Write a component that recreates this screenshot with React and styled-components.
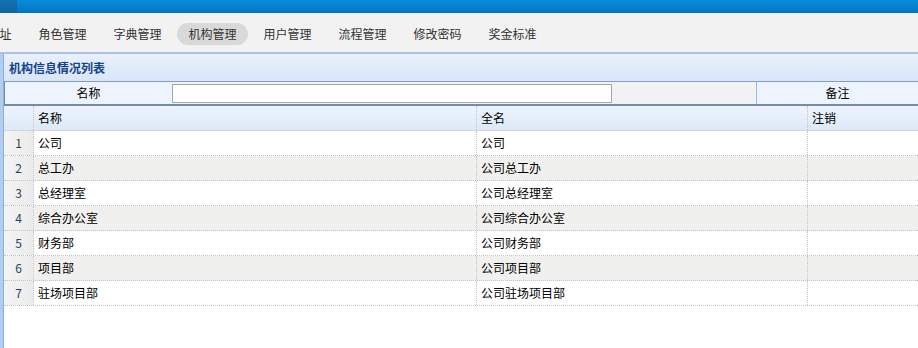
import React from "react";
import styled, { createGlobalStyle } from "styled-components";

const Global = createGlobalStyle`
  html, body { margin: 0; padding: 0; background: #fff; }
  body {
    width: 918px; height: 348px; overflow: hidden;
    font-family: "Noto Sans CJK SC", "Liberation Sans", sans-serif;
    font-size: 12px; color: #000;
  }
`;

const TopBar = styled.div`
  height: 13px;
  display: flex;
  background: linear-gradient(#0b8cd8, #0074c6);
`;

const Logo = styled.div`
  width: 17px;
  background: linear-gradient(#1473b3, #0e63a0);
`;

const Nav = styled.div`
  height: 39px;
  background: #f2f2f2;
  border-bottom: 2px solid #a9c4e6;
  display: flex;
  align-items: center;
  overflow: hidden;
`;

const NavList = styled.div`
  display: flex;
  gap: 4px;
  margin-left: -24px;
  margin-top: 2px;
`;

const NavItem = styled.div`
  height: 22px;
  line-height: 22px;
  padding: 0 11.5px;
  border-radius: 11px;
  color: #333;
  white-space: nowrap;
  background: ${(p) => (p.$active ? "#d9d9d9" : "transparent")};
`;

const Body = styled.div`
  display: flex;
  height: 294px;
`;

const Rail = styled.div`
  width: 3px;
  background: #b3cdef;
`;

const Panel = styled.div`
  flex: 1;
  border-left: 1px solid #8fb0db;
  display: flex;
  flex-direction: column;
`;

const PanelTitle = styled.div`
  height: 27px;
  line-height: 27px;
  padding-left: 5px;
  font-weight: bold;
  color: #15428b;
  background: linear-gradient(#e8f0fc, #d9e6f8);
`;

const Search = styled.div`
  display: grid;
  grid-template-columns: 167px 442px 142px 1fr;
  height: 22px;
  border-top: 1px solid #7f9fc8;
  border-left: 1px solid #6f8db5;
  border-bottom: 2px solid #6f8cb2;
`;

const Label = styled.div`
  background: #eef4fd;
  text-align: center;
  line-height: 22px;
  ${(p) => p.$divider && "border-left: 1px solid #99bbe8;"}
`;

const InputCell = styled.div`
  background: #f2f2f2;
  padding: 2px 0 0 0;
`;

const TextBox = styled.div`
  width: 438px;
  height: 17px;
  background: #fff;
  border: 1px solid #a6a6a6;
`;

const Filler = styled.div`
  background: #f2f2f2;
`;

const Row = styled.div`
  display: grid;
  grid-template-columns: 30px 443px 331px 1fr;
  height: 24px;
  line-height: 24px;
  background: ${(p) => (p.$head ? "linear-gradient(#eef4fd, #dde9f9)" : p.$alt ? "#f0f0ee" : "#fff")};
  border-bottom: 1px ${(p) => (p.$head ? "solid #d4d4d4" : "dotted #c4c4c4")};
`;

const Cell = styled.div`
  padding-left: 4px;
  border-right: 1px dotted #c4c4c4;
  overflow: hidden;
  white-space: nowrap;
  &:last-child { border-right: none; }
`;

const Num = styled.div`
  text-align: center;
  color: #2b3f5c;
  border-right: 1px dotted #c4c4c4;
  background: ${(p) => (p.$head ? "transparent" : "linear-gradient(90deg, #f4f4f4, #ebebeb)")};
`;

const navs = ["地址", "角色管理", "字典管理", "机构管理", "用户管理", "流程管理", "修改密码", "奖金标准"];

const rows = [
  ["公司", "公司"],
  ["总工办", "公司总工办"],
  ["总经理室", "公司总经理室"],
  ["综合办公室", "公司综合办公室"],
  ["财务部", "公司财务部"],
  ["项目部", "公司项目部"],
  ["驻场项目部", "公司驻场项目部"],
];

export default function App() {
  return (
    <>
      <Global />
      <TopBar>
        <Logo />
      </TopBar>
      <Nav>
        <NavList>
          {navs.map((n) => (
            <NavItem key={n} $active={n === "机构管理"}>{n}</NavItem>
          ))}
        </NavList>
      </Nav>
      <Body>
        <Rail />
        <Panel>
          <PanelTitle>机构信息情况列表</PanelTitle>
          <Search>
            <Label>名称</Label>
            <InputCell><TextBox /></InputCell>
            <Filler />
            <Label $divider>备注</Label>
          </Search>
          <Row $head>
            <Num $head />
            <Cell>名称</Cell>
            <Cell>全名</Cell>
            <Cell>注销</Cell>
          </Row>
          {rows.map((r, i) => (
            <Row key={i} $alt={i % 2 === 1}>
              <Num>{i + 1}</Num>
              <Cell>{r[0]}</Cell>
              <Cell>{r[1]}</Cell>
              <Cell />
            </Row>
          ))}
        </Panel>
      </Body>
    </>
  );
}
